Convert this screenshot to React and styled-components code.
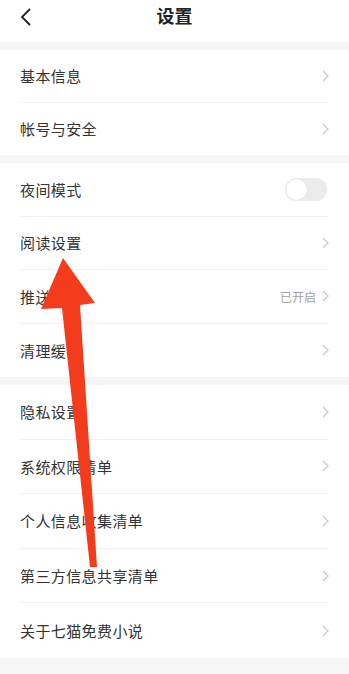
import styled, { createGlobalStyle } from 'styled-components';

const GlobalStyle = createGlobalStyle`
  html, body {
    margin: 0;
    padding: 0;
    background: #f5f5f5;
  }
  body {
    font-family: "Noto Sans CJK SC", "Noto Sans", sans-serif;
  }
`;

const Page = styled.div`
  position: relative;
  width: 349px;
  height: 674px;
  overflow: hidden;
  background: #f5f5f5;
`;

const Header = styled.div`
  height: 42px;
  background: #fff;
  display: flex;
  align-items: center;
  justify-content: center;
  position: relative;
`;

const BackButton = styled.div`
  position: absolute;
  left: 20px;
  top: 7px;
  width: 16px;
  height: 20px;
  display: flex;
  align-items: center;
`;

const Title = styled.h1`
  margin: 0 0 12px 0;
  font-size: 18px;
  font-weight: 600;
  color: #222;
`;

const Section = styled.div`
  background: #fff;
  margin-top: 8px;
`;

const Row = styled.div`
  height: ${props => props.h}px;
  margin: 0 20px;
  display: flex;
  align-items: center;
  justify-content: space-between;
  border-bottom: ${props => (props.last ? 'none' : '1px solid #f0f0f0')};
  box-sizing: border-box;
`;

const Label = styled.span`
  font-size: 15px;
  color: #333;
  letter-spacing: 0.4px;
`;

const Right = styled.div`
  display: flex;
  align-items: center;
  gap: 6px;
`;

const Hint = styled.span`
  font-size: 12px;
  color: #a0a0a0;
`;

const Toggle = styled.div`
  width: 42px;
  height: 23px;
  border-radius: 12px;
  background: #ebebeb;
  position: relative;
  margin-right: 2px;
`;

const Knob = styled.div`
  position: absolute;
  left: 1px;
  top: 1px;
  width: 21px;
  height: 21px;
  border-radius: 50%;
  background: #fff;
  box-shadow: 0 0 1px rgba(0, 0, 0, 0.15);
`;

const Overlay = styled.svg`
  position: absolute;
  left: 0;
  top: 0;
  pointer-events: none;
`;

const Chevron = () => (
  <svg width="7" height="12" viewBox="0 0 7 12">
    <path d="M1 1 L6 6 L1 11" fill="none" stroke="#c8c8c8" strokeWidth="1.2" />
  </svg>
);

const sections = [
  {
    h: 52.5,
    rows: [{ label: '基本信息' }, { label: '帐号与安全' }],
  },
  {
    h: 53.5,
    rows: [
      { label: '夜间模式', toggle: true },
      { label: '阅读设置' },
      { label: '推送设置', hint: '已开启' },
      { label: '清理缓存' },
    ],
  },
  {
    h: 54.6,
    rows: [
      { label: '隐私设置' },
      { label: '系统权限清单' },
      { label: '个人信息收集清单' },
      { label: '第三方信息共享清单' },
      { label: '关于七猫免费小说' },
    ],
  },
];

export default function App() {
  return (
    <Page>
      <GlobalStyle />
      <Header>
        <BackButton>
          <svg width="12" height="18" viewBox="0 0 12 18">
            <path d="M10 1 L2 9 L10 17" fill="none" stroke="#222" strokeWidth="1.8" />
          </svg>
        </BackButton>
        <Title>设置</Title>
      </Header>
      {sections.map((s, si) => (
        <Section key={si}>
          {s.rows.map((r, ri) => (
            <Row key={r.label} h={s.h} last={ri === s.rows.length - 1}>
              <Label>{r.label}</Label>
              {r.toggle ? (
                <Toggle>
                  <Knob />
                </Toggle>
              ) : (
                <Right>
                  {r.hint && <Hint>{r.hint}</Hint>}
                  <Chevron />
                </Right>
              )}
            </Row>
          ))}
        </Section>
      ))}
      <Overlay width="349" height="674" viewBox="0 0 349 674">
        <polygon
          points="63,258 95,303 80,305 97,567 90,567 62,308 41,309"
          fill="#f33c1c"
        />
      </Overlay>
    </Page>
  );
}
